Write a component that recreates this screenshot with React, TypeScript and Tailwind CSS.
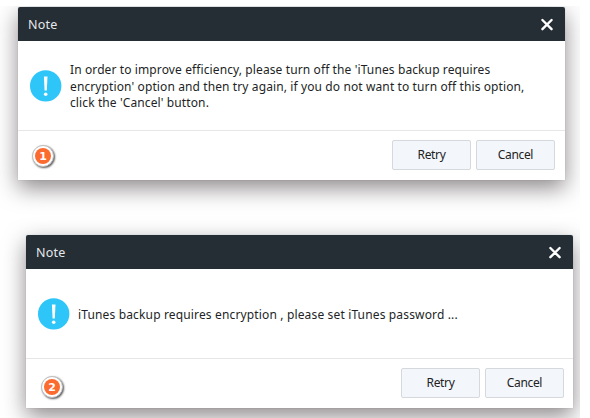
import type { ReactNode } from "react";
import clsx from "clsx";

interface NoteDialogProps {
    step: number;
    children: ReactNode;
    badgeClassName?: string;
    actionsClassName?: string;
}

function CloseIcon() {
    return (
        <svg className="mt-px" width="14" height="14" viewBox="0 0 14 14" fill="none" stroke="#ffffff" strokeWidth="2.4" strokeLinecap="round">
            <path d="M2.4 2 L11.6 11.2 M11.6 2 L2.4 11.2" />
        </svg>
    );
}

function AlertIcon() {
    return (
        <svg className="shrink-0" width="32" height="32" viewBox="0 0 32 32">
            <circle cx="15.7" cy="15.9" r="15.7" fill="#2ec6f9" />
            <path d="M13.9 6.6 H17.5 L16.8 20.6 H14.6 Z" fill="#ffffff" />
            <circle cx="15.7" cy="24.2" r="1.8" fill="#ffffff" />
        </svg>
    );
}

function StepBadge({ step, className }: { step: number; className?: string }) {
    return (
        <div
            className={clsx(
                "flex size-[22px] items-center justify-center rounded-full border border-[#bdbdbd] bg-white shadow-[1px_1px_2px_0px_rgba(0,0,0,0.65)]",
                className
            )}
        >
            <span className="flex size-4 items-center justify-center rounded-full bg-[#fb6b30] font-['DejaVu_Sans',sans-serif] text-[11px] leading-none font-bold text-white">
                {step}
            </span>
        </div>
    );
}

function DialogButton({ label }: { label: string }) {
    return (
        <button
            type="button"
            className="h-[30px] w-[79px] rounded-[2px] border border-[#d5d9dc] bg-[#f3f7fb] text-[12px] leading-none tracking-[-0.35px] text-[#222222]"
        >
            {label}
        </button>
    );
}

function NoteDialog({ step, children, badgeClassName, actionsClassName }: NoteDialogProps) {
    return (
        <section className="flex h-[172.5px] w-[547px] shrink-0 flex-col rounded-t-[2px] bg-white shadow-[0_0_1px_rgba(0,0,0,0.3),0_8px_22px_rgba(45,35,40,0.54)]">
            <header className="flex h-[34px] shrink-0 items-center justify-between rounded-t-[2px] bg-[#252d35] pr-[11px] pl-[10px]">
                <h2 className="pt-[3px] text-[12.5px] leading-none tracking-[0.2px] text-[#e6e8e9]">Note</h2>
                <CloseIcon />
            </header>
            <div className="flex h-[89px] shrink-0 items-center gap-2 pl-3 text-[12px] leading-[16.7px] tracking-[0.11px] whitespace-nowrap text-[#231f26]">
                <AlertIcon />
                {children}
            </div>
            <footer className="flex grow items-center justify-between border-t border-[#e6e6e6] pr-[10px] pb-[1.5px] pl-[14px]">
                <StepBadge step={step} className={badgeClassName} />
                <div className={clsx("flex gap-[5px]", actionsClassName)}>
                    <DialogButton label="Retry" />
                    <DialogButton label="Cancel" />
                </div>
            </footer>
        </section>
    );
}

export default function App() {
    return (
        <main className="h-[418px] w-[590px] overflow-hidden bg-white pt-[6px] font-['Noto_Sans','Open_Sans',sans-serif]">
            <div className="h-[412px] w-[580px] overflow-hidden">
                <div className="flex flex-col gap-[55.5px] pt-px pl-[18px]">
                    <NoteDialog step={1} badgeClassName="mt-[3px]">
                        <p className="pt-[3px]">
                            In order to improve efficiency, please turn off the 'iTunes backup requires
                            <br />
                            encryption' option and then try again, if you do not want to turn off this option,
                            <br />
                            click the 'Cancel' button.
                        </p>
                    </NoteDialog>
                    <div className="pl-2">
                        <NoteDialog step={2} badgeClassName="mt-[9px] ml-px" actionsClassName="-mr-px">
                            <p className="pt-[3px] tracking-[0.15px]">
                                iTunes backup requires encryption , please set iTunes password ...
                            </p>
                        </NoteDialog>
                    </div>
                </div>
            </div>
        </main>
    );
}
